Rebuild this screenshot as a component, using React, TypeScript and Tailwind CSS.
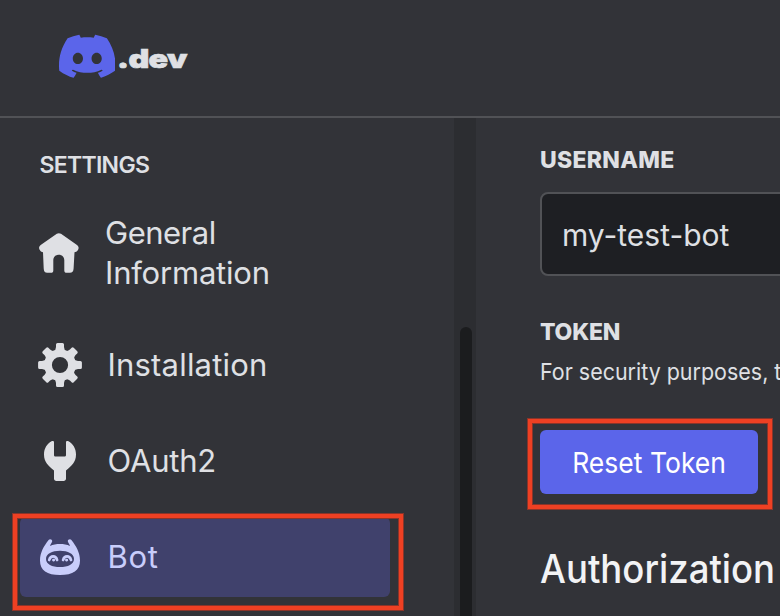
import type { ReactNode } from "react";
import { SiDiscord } from "react-icons/si";

function HomeIcon() {
  return (
    <svg width="48" height="48" viewBox="0 0 48 48" fill="currentColor">
      <path d="M20.800 4.800q2.100-1.300 4.200 0L41 16.100c2.200 1.700 1.900 4 .6 5.500-.8.900-1.900 1.600-3.100 1.700l-.9 16.200c-.2 2.900-1.300 4.300-3.700 4.300h-3.300c-1.500 0-2.300-.9-2.300-2.400V31.200c0-3.200-2.400-5.400-5.500-5.400s-5.500 2.200-5.500 5.400v10.200c0 1.500-.8 2.400-2.300 2.400h-3.800c-2.400 0-3.300-1.400-3.500-4.300L7 23.300c-1.200-.1-2.100-.8-2.900-1.700-1.300-1.500-1.600-3.800.6-5.500z" />
    </svg>
  );
}

const teeth = [0, 45, 90, 135, 180, 225, 270, 315];

function GearIcon() {
  return (
    <svg width="48" height="48" viewBox="0 0 48 48" fill="currentColor">
      <path fillRule="evenodd" d="M24 8.200a15.800 15.800 0 1 0 0 31.600 15.800 15.800 0 0 0 0-31.600zm0 7.700a8.100 8.100 0 1 1 0 16.200 8.100 8.100 0 0 1 0-16.200z" />
      {teeth.map((angle) => (
        <path key={angle} transform={`rotate(${angle} 24 24)`} d="M17.800 10.500Q19.800 9 20 6V3.600Q20 2.100 21.500 2.100h5q1.500 0 1.500 1.500V6q.2 3 2.200 4.500z" />
      ))}
    </svg>
  );
}

function WrenchIcon() {
  return (
    <svg width="48" height="48" viewBox="0 0 48 48" fill="currentColor">
      <path d="M18 5.200v12.700c0 1 .7 1.700 1.700 1.700h8.600c1 0 1.700-.7 1.700-1.700V5.200c0-1.100 1-1.500 2-1.100C36.800 6.500 40 11.500 40 17.500c0 7.500-4.200 11-10 16v8c0 1.500-.9 2.500-2.500 2.500h-7c-1.600 0-2.500-1-2.500-2.500v-8c-5.800-5-10-8.500-10-16C8 11.500 11.200 6.500 16 4.100c1-.4 2 0 2 1.100z" />
    </svg>
  );
}

function BotIcon() {
  return (
    <svg width="48" height="48" viewBox="0 0 48 48" fill="none" stroke="currentColor" strokeLinecap="round">
      <path fill="currentColor" stroke="none" fillRule="evenodd" d="M12.600 7c1-1.500 3.800-.8 3.600 1.300-.1 1-1.900 3.500-2.200 4.600 6-2.600 14-2.600 20 0-.3-1.100-2.100-3.600-2.200-4.600-.2-2.100 2.600-2.800 3.600-1.300 4.800 6.200 8.600 12.500 8.600 20.500C44 37.500 37 42 24 42S4 37.500 4 27.500C4 19.500 7.800 13.200 12.600 7zM24 17.800c-8 0-14 3-14 8.100S16 34 24 34s14-3 14-8.100-6-8.100-14-8.100z" />
      <path strokeWidth="2.700" d="M13.200 27c1.200-4.800 6.700-4.800 7.900 0M17.800 27.100h-.4M27.100 27c1.200-4.800 6.700-4.800 7.900 0M30.800 27.100h-.4" />
    </svg>
  );
}

function NavItem({ icon, children, active = false, wide = false }: { icon: ReactNode; children: ReactNode; active?: boolean; wide?: boolean }) {
  return (
    <a className={`flex w-[370px] items-center rounded-md pl-4 text-[31px] leading-10 ${wide ? "h-28 gap-[21px]" : "h-20 gap-[23.500px]"} ${active ? "bg-[#40416c] text-[#c9cdfb]" : "text-[#dfe0e4]"}`}>
      <span className="shrink-0">{icon}</span>
      {children}
    </a>
  );
}

const highlight = "pointer-events-none absolute border-4 border-[#ee4023] shadow-[0_0_0_1px_#8b3429,inset_0_0_0_1px_#8b3429]";

export default function App() {
  return (
    <div className="relative flex h-[616px] w-[780px] flex-col overflow-hidden bg-[#323338] font-['Inter',sans-serif] text-[#dfe0e4]">
      <header className="flex h-[118px] shrink-0 items-start border-b-2 border-[#515256] pt-[27.500px] pl-[58.5px]">
        <SiDiscord className="h-[56.500px] w-[56.500px] text-[#5b65ea]" />
        <span className="mt-[15.500px] ml-0.5 origin-left scale-x-[1.24] text-[26px] leading-8 font-black tracking-[-0.5px] [-webkit-text-stroke:0.7px_#dfe0e4]">.dev</span>
      </header>
      <div className="flex min-h-0 flex-1">
        <aside className="w-[454px] shrink-0 pl-5">
          <h2 className="mt-[31px] mb-4 pl-[19.5px] text-[23px] leading-8 font-semibold tracking-[-0.7px]">SETTINGS</h2>
          <nav className="flex flex-col gap-4">
            <NavItem wide icon={<HomeIcon />}>
              <span>
                <span className="tracking-[-0.5px]">General</span>
                <br />
                <span className="tracking-[-0.200px]">Information</span>
              </span>
            </NavItem>
            <NavItem icon={<GearIcon />}><span className="tracking-[0.200px]">Installation</span></NavItem>
            <NavItem icon={<WrenchIcon />}><span className="tracking-[-0.200px]">OAuth2</span></NavItem>
            <div className="relative">
              <NavItem active icon={<BotIcon />}><span className="tracking-[0.700px]">Bot</span></NavItem>
              <div className={`${highlight} -top-[3px] -left-[7px] h-[96px] w-[390px]`} />
            </div>
          </nav>
        </aside>
        <div className="w-[22px] shrink-0 bg-[#2c2d31] pr-1 pl-1.5 pt-[209px]">
          <div className="h-[400px] rounded-full bg-[#1b1c1e]" />
        </div>
        <main className="w-[304px] shrink-0 overflow-hidden pl-16 whitespace-nowrap">
          <h2 className="mt-[26px] text-[23px] leading-8 font-extrabold tracking-[0.300px]">USERNAME</h2>
          <div className="mt-4 flex h-[84px] w-[300px] items-center rounded-lg border-2 border-[#515256] bg-[#1e1f23] pt-0.5 pl-5 text-[30px]">my-test-bot</div>
          <h2 className="mt-10 text-[23px] leading-8 font-extrabold tracking-[-0.200px]">TOKEN</h2>
          <p className="mt-2 origin-left scale-x-[0.933] text-[23px] leading-8">For security purposes, tokens can only be viewed</p>
          <div className="relative mt-[42px] w-[218px]">
            <button className="flex h-16 w-[218px] items-center justify-center rounded-md bg-[#5b65ea] pt-0.5 text-[29px] text-white">
              <span className="scale-x-[0.915]">Reset Token</span>
            </button>
            <div className={`${highlight} -top-[11px] -left-[12px] h-[90px] w-[244px]`} />
          </div>
          <h1 className="mt-[51px] w-[260px] origin-left scale-x-[0.937] text-[39px] leading-[48px] font-medium text-[#f2f3f5]">Authorization</h1>
          <p className="mt-[17px] text-[23px] leading-8">These settings</p>
        </main>
      </div>
    </div>
  );
}
